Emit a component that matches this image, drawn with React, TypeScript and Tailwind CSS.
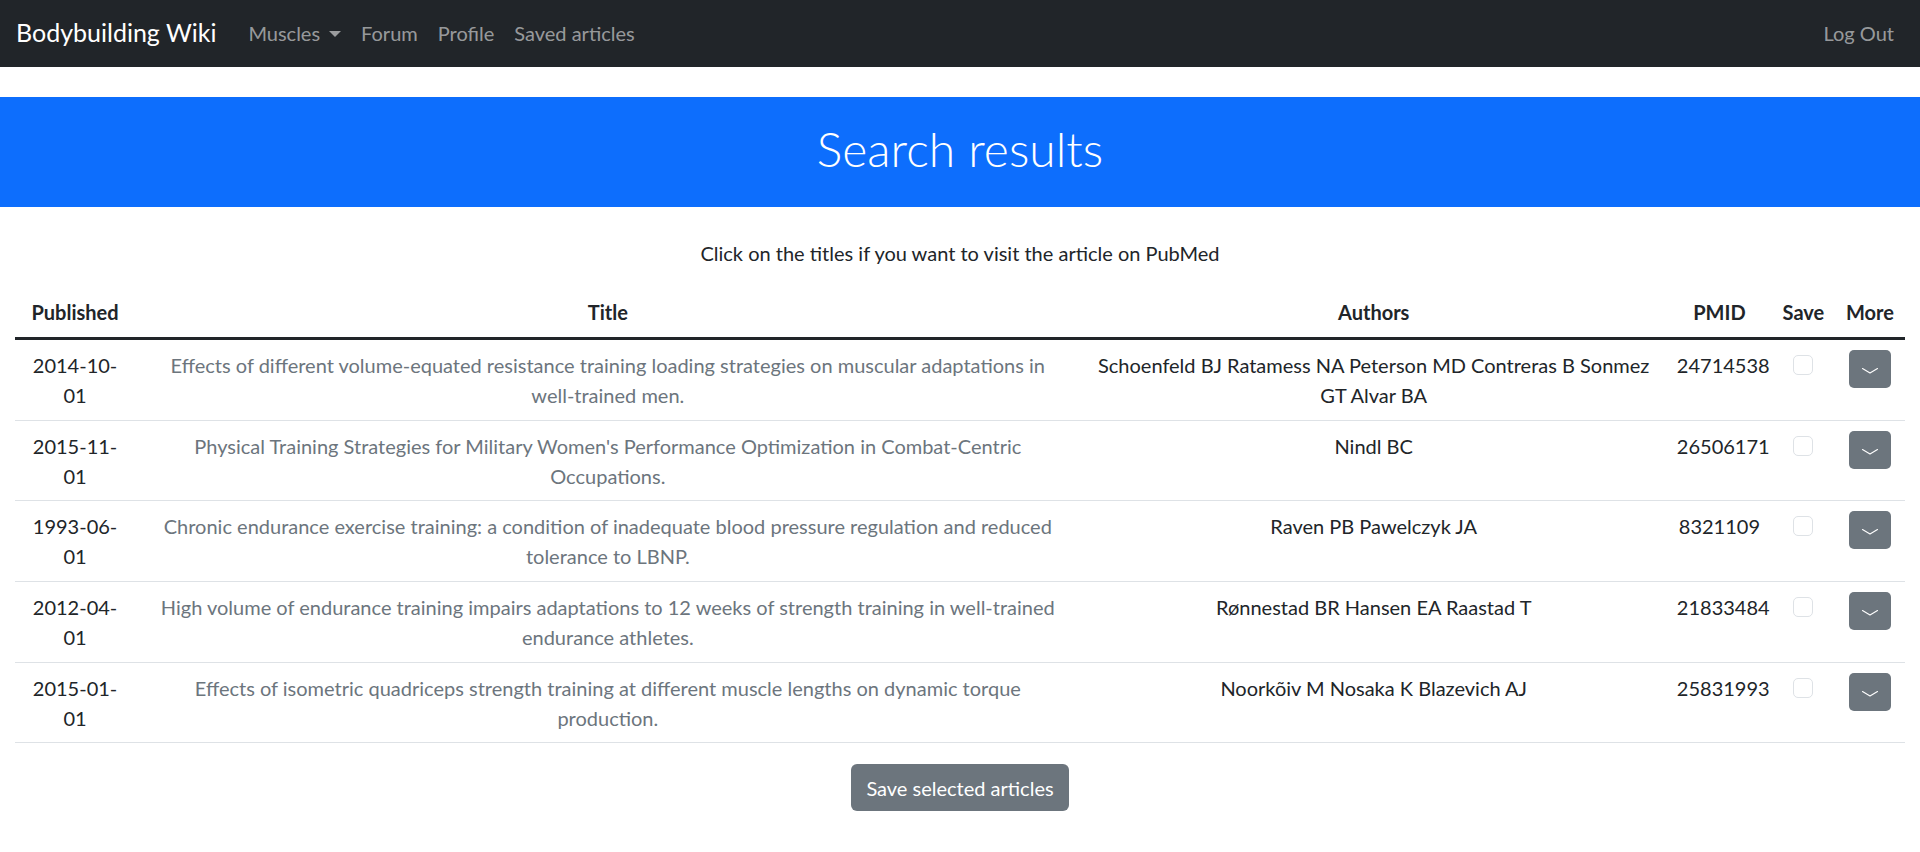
import React, { useState } from 'react';

interface Article {
  published: string[];
  title: string[];
  authors: string[];
  pmid: string;
}

const articles: Article[] = [
  {
    published: ['2014-10-', '01'],
    title: [
      'Effects of different volume-equated resistance training loading strategies on muscular adaptations in',
      'well-trained men.',
    ],
    authors: ['Schoenfeld BJ Ratamess NA Peterson MD Contreras B Sonmez', 'GT Alvar BA'],
    pmid: '24714538',
  },
  {
    published: ['2015-11-', '01'],
    title: [
      "Physical Training Strategies for Military Women's Performance Optimization in Combat-Centric",
      'Occupations.',
    ],
    authors: ['Nindl BC'],
    pmid: '26506171',
  },
  {
    published: ['1993-06-', '01'],
    title: [
      'Chronic endurance exercise training: a condition of inadequate blood pressure regulation and reduced',
      'tolerance to LBNP.',
    ],
    authors: ['Raven PB Pawelczyk JA'],
    pmid: '8321109',
  },
  {
    published: ['2012-04-', '01'],
    title: [
      'High volume of endurance training impairs adaptations to 12 weeks of strength training in well-trained',
      'endurance athletes.',
    ],
    authors: ['Rønnestad BR Hansen EA Raastad T'],
    pmid: '21833484',
  },
  {
    published: ['2015-01-', '01'],
    title: [
      'Effects of isometric quadriceps strength training at different muscle lengths on dynamic torque',
      'production.',
    ],
    authors: ['Noorkõiv M Nosaka K Blazevich AJ'],
    pmid: '25831993',
  },
];

// keeps the wrap points of the original page
const Lines = ({ lines }: { lines: string[] }) => (
  <>
    {lines.map((l, i) => (
      <React.Fragment key={i}>
        {i > 0 && <br />}
        {l}
      </React.Fragment>
    ))}
  </>
);

const Row = ({ article }: { article: Article }) => {
  const [checked, setChecked] = useState(false);
  return (
    <tr className="border-b border-[#dee2e6] align-top">
      <td className="pt-[10px] pb-[9.67px] px-[10px] text-center">
        <Lines lines={article.published} />
      </td>
      <td className="pt-[10px] pb-[9.67px] px-[10px] text-center">
        <a href="#" className="text-[#6c757d] no-underline">
          <Lines lines={article.title} />
        </a>
      </td>
      <td className="pt-[10px] pb-[9.67px] px-[10px] text-center">
        <Lines lines={article.authors} />
      </td>
      <td className="pt-[10px] pb-[9.67px] px-[10px] text-center">{article.pmid}</td>
      <td className="pt-[10px] pb-[9.67px] px-[10px]">
        <div className="flex justify-center pt-[5px]">
          <button
            onClick={() => setChecked(!checked)}
            className={`w-[20px] h-[20px] rounded-[5px] border border-[#dee2e6] ${checked ? 'bg-[#0d6efd]' : 'bg-white'}`}
          />
        </div>
      </td>
      <td className="pt-[10px] pb-[9.67px] px-[10px]">
        <div className="flex justify-center">
          <button className="w-[42px] h-[38px] rounded-[5px] bg-[#6c757d] flex items-center justify-center pt-[4px]">
            <svg width="18" height="8" viewBox="0 0 18 8" fill="none">
              <path d="M1.5 1.5 L9 6 L16.5 1.5" stroke="white" strokeWidth="1.1" strokeLinecap="round" strokeLinejoin="round" />
            </svg>
          </button>
        </div>
      </td>
    </tr>
  );
};

export default function App() {
  return (
    <div className="min-h-screen bg-white font-['Lato',sans-serif] text-[20px] leading-[30px] text-[#212529]">
      <nav className="h-[67px] bg-[#212529] flex items-center pl-[16px] pr-[26px] pb-[2px]">
        <a href="#" className="text-[25px] leading-[37px] text-white mr-[22px]">Bodybuilding Wiki</a>
        <div className="flex items-center text-[rgba(255,255,255,0.55)]">
          <a href="#" className="px-[10px] flex items-center">
            Muscles
            <span className="ml-[9px] mt-[2px] w-0 h-0 border-x-[6px] border-x-transparent border-t-[6px] border-t-[rgba(255,255,255,0.55)]" />
          </a>
          <a href="#" className="px-[10px]">Forum</a>
          <a href="#" className="px-[10px]">Profile</a>
          <a href="#" className="px-[10px]">Saved articles</a>
        </div>
        <a href="#" className="ml-auto text-[rgba(255,255,255,0.55)]">Log Out</a>
      </nav>

      <div className="mt-[30px] h-[110px] bg-[#0d6efd] flex items-center justify-center pb-[7px]">
        <h1 className="text-[48px] leading-[58px] font-light text-white">Search results</h1>
      </div>

      <p className="mt-[31px] mb-[19px] text-center">Click on the titles if you want to visit the article on PubMed</p>

      <div className="px-[15px]">
        <table className="w-full table-fixed border-collapse">
          <colgroup>
            <col className="w-[120px]" />
            <col className="w-[945px]" />
            <col className="w-[586px]" />
            <col className="w-[105px]" />
            <col className="w-[63px]" />
            <col className="w-[70px]" />
          </colgroup>
          <thead>
            <tr className="border-b-[3px] border-[#212529]">
              <th className="p-[10px] font-bold text-center">Published</th>
              <th className="p-[10px] font-bold text-center">Title</th>
              <th className="p-[10px] font-bold text-center">Authors</th>
              <th className="p-[10px] font-bold text-center">PMID</th>
              <th className="p-[10px] font-bold text-center">Save</th>
              <th className="p-[10px] font-bold text-center">More</th>
            </tr>
          </thead>
          <tbody>
            {articles.map((a) => (
              <Row key={a.pmid} article={a} />
            ))}
          </tbody>
        </table>
      </div>

      <div className="flex justify-center mt-[21px]">
        <button className="h-[47px] px-[15px] rounded-[6px] bg-[#6c757d] text-white">Save selected articles</button>
      </div>
    </div>
  );
}
